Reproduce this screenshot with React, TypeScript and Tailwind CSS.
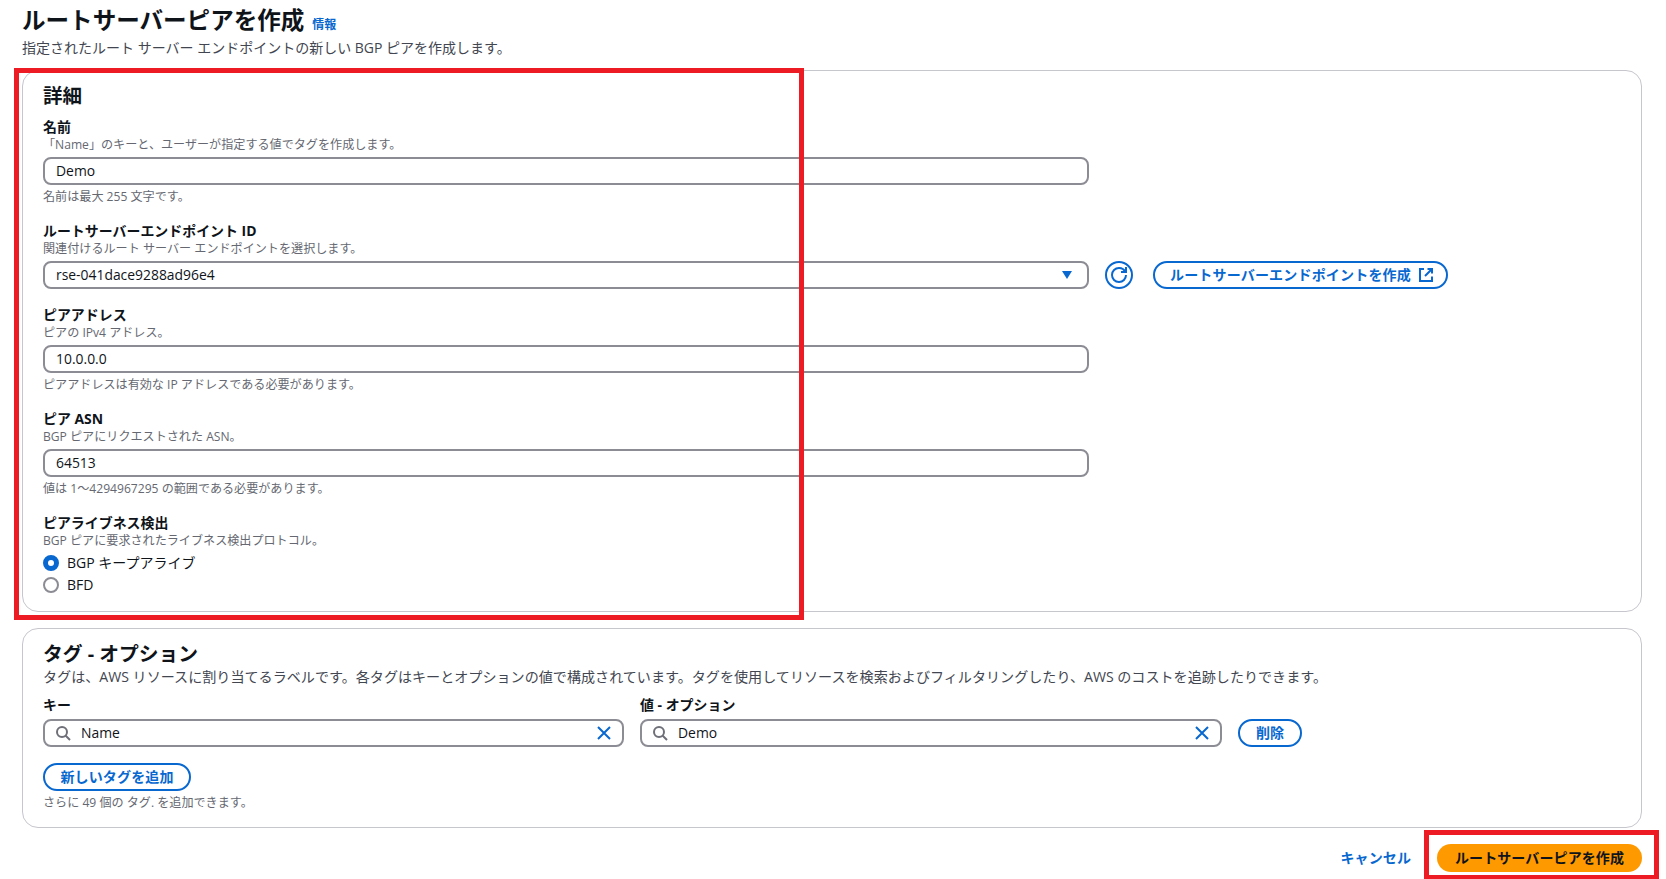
import { useState } from "react";
import type { ReactNode } from "react";

function SearchIcon() {
  return (
    <svg className="h-4 w-4 shrink-0" viewBox="0 0 16 16" fill="none" stroke="#6e6f78" strokeWidth="2">
      <circle cx="7" cy="7" r="5" />
      <path d="m15 15-4.5-4.5" />
    </svg>
  );
}

function CloseIcon() {
  return (
    <svg className="h-4 w-4 shrink-0" viewBox="0 0 16 16" fill="none" stroke="#0868d0" strokeWidth="2">
      <path d="m2 2 12 12M14 2 2 14" />
    </svg>
  );
}

function RefreshIcon() {
  return (
    <svg className="h-4 w-4 shrink-0" viewBox="0 0 16 16" fill="none" stroke="#0868d0" strokeWidth="2">
      <path d="M10 5h5V0" />
      <path d="M15 8a6.957 6.957 0 0 1-7 7 6.957 6.957 0 0 1-7-7 6.957 6.957 0 0 1 7-7 6.87 6.87 0 0 1 6.3 4" />
    </svg>
  );
}

function ExternalIcon() {
  return (
    <svg className="h-4 w-4 shrink-0" viewBox="0 0 16 16" fill="none" stroke="#0868d0" strokeWidth="2">
      <path d="M9.5 2H14v4.5M7 9l7-7" />
      <path d="M14 9.5V14H2V2h4" />
    </svg>
  );
}

type FieldProps = {
  label: string;
  description: string;
  constraint?: string;
  children: ReactNode;
};

function Field({ label, description, constraint, children }: FieldProps) {
  return (
    <div className="mb-[17px]">
      <div className="h-[19px] text-[13.95px] leading-[17px] font-bold">{label}</div>
      <div className="h-4 text-[12.1px] leading-4 text-[#656871]">{description}</div>
      <div className="mt-1">{children}</div>
      {constraint && <div className="mt-1 h-4 text-[12.1px] leading-4 text-[#656871]">{constraint}</div>}
    </div>
  );
}

const inputClass =
  "block h-7 w-[1046px] rounded-lg border-2 border-[#8c8c94] bg-white px-[11px] pb-px text-[13.9px] outline-none";

const radioClass =
  "h-4 w-4 appearance-none rounded-full border-2 border-[#8c8c94] checked:border-5 checked:border-[#0868d0]";

function TagInput({ label, initial }: { label: string; initial: string }) {
  const [value, setValue] = useState(initial);

  return (
    <div>
      <div className="h-[19px] text-[13.95px] leading-[17px] font-bold">{label}</div>
      <div className="mt-1 flex h-7 items-center rounded-lg border-2 border-[#8c8c94] px-[10px]">
        <SearchIcon />
        <input
          value={value}
          onChange={(e) => setValue(e.target.value)}
          className="ml-2.5 min-w-0 flex-1 text-[13.9px] outline-none"
        />
        <button type="button" onClick={() => setValue("")}>
          <CloseIcon />
        </button>
      </div>
    </div>
  );
}

export default function App() {
  const [name, setName] = useState("Demo");
  const [address, setAddress] = useState("10.0.0.0");
  const [asn, setAsn] = useState("64513");
  const [liveness, setLiveness] = useState("bgp");

  return (
    <main className="relative h-[879px] w-[1666px] overflow-hidden bg-white px-[22px] font-['Open_Sans','Noto_Sans_CJK_JP',sans-serif] whitespace-nowrap text-[#0f141a]">
      <header className="h-[70px] pt-[5px]">
        <div className="flex h-[30px] items-baseline">
          <h1 className="text-[23.55px] leading-[30px] font-bold">ルートサーバーピアを作成</h1>
          <a className="ml-2 text-xs font-bold text-[#0868d0]">情報</a>
        </div>
        <p className="mt-[3px] text-sm leading-5 text-[#424650]">
          指定されたルート サーバー エンドポイントの新しい BGP ピアを作成します。
        </p>
      </header>

      <section className="h-[542px] w-[1620px] rounded-2xl border border-[#c6c6cd] px-5 pt-[13px]">
        <h2 className="mb-[10px] h-6 text-[19.5px] leading-6 font-bold">詳細</h2>

        <Field
          label="名前"
          description="「Name」のキーと、ユーザーが指定する値でタグを作成します。"
          constraint="名前は最大 255 文字です。"
        >
          <input className={inputClass} value={name} onChange={(e) => setName(e.target.value)} />
        </Field>

        <Field
          label="ルートサーバーエンドポイント ID"
          description="関連付けるルート サーバー エンドポイントを選択します。"
        >
          <div className="flex items-center">
            <button type="button" className="flex h-7 w-[1046px] items-center justify-between rounded-lg border-2 border-[#8c8c94] pr-[15px] pl-[11px] text-[13.9px]">
              <span>rse-041dace9288ad96e4</span>
              <svg className="h-2 w-2.5" viewBox="0 0 10 8" fill="#0868d0">
                <path d="M0 0h10L5 8z" />
              </svg>
            </button>
            <button type="button" className="ml-4 flex h-7 w-7 items-center justify-center rounded-full border-2 border-[#0868d0]">
              <RefreshIcon />
            </button>
            <a className="ml-5 flex h-7 w-[295px] items-center justify-between rounded-full border-2 border-[#0868d0] pr-3 pl-[15px] text-sm font-bold tracking-[0.18px] text-[#0868d0]">
              <span>ルートサーバーエンドポイントを作成</span>
              <ExternalIcon />
            </a>
          </div>
        </Field>

        <Field
          label="ピアアドレス"
          description="ピアの IPv4 アドレス。"
          constraint="ピアアドレスは有効な IP アドレスである必要があります。"
        >
          <input className={inputClass} value={address} onChange={(e) => setAddress(e.target.value)} />
        </Field>

        <Field
          label="ピア ASN"
          description="BGP ピアにリクエストされた ASN。"
          constraint="値は 1～4294967295 の範囲である必要があります。"
        >
          <input className={inputClass} value={asn} onChange={(e) => setAsn(e.target.value)} />
        </Field>

        <Field label="ピアライブネス検出" description="BGP ピアに要求されたライブネス検出プロトコル。">
          <div className="-mt-px">
            <label className="flex h-[22px] items-center gap-2 text-sm">
              <input
                type="radio"
                checked={liveness === "bgp"}
                onChange={() => setLiveness("bgp")}
                className={radioClass}
              />
              <span>BGP キープアライブ</span>
            </label>
            <label className="flex h-[22px] items-center gap-2 text-sm">
              <input
                type="radio"
                checked={liveness === "bfd"}
                onChange={() => setLiveness("bfd")}
                className={radioClass}
              />
              <span>BFD</span>
            </label>
          </div>
        </Field>
      </section>

      <section className="mt-4 h-[200px] w-[1620px] rounded-2xl border border-[#c6c6cd] px-5 pt-[13px]">
        <h2 className="h-6 text-[19.8px] leading-6 font-bold">タグ - オプション</h2>
        <p className="h-5 text-[14.09px] leading-[22px] text-[#424650]">
          タグは、AWS リソースに割り当てるラベルです。各タグはキーとオプションの値で構成されています。タグを使用してリソースを検索およびフィルタリングしたり、AWS のコストを追跡したりできます。
        </p>
        <div className="mt-[10px] flex items-end">
          <div className="w-[581px]">
            <TagInput label="キー" initial="Name" />
          </div>
          <div className="ml-4 w-[582px]">
            <TagInput label="値 - オプション" initial="Demo" />
          </div>
          <button type="button" className="ml-4 h-7 w-16 rounded-full border-2 border-[#0868d0] text-sm leading-6 font-bold text-[#0868d0]">
            削除
          </button>
        </div>
        <button type="button" className="mt-4 flex h-7 w-[148px] items-center justify-center rounded-full border-2 border-[#0868d0] text-sm font-bold tracking-[0.15px] text-[#0868d0]">
          新しいタグを追加
        </button>
        <div className="mt-1 text-[12.1px] leading-4 text-[#656871]">さらに 49 個の タグ. を追加できます。</div>
      </section>

      <footer className="mt-4 flex w-[1620px] items-center justify-end text-sm font-bold tracking-[0.1px]">
        <button type="button" className="mr-[26px] text-[#0868d0]">キャンセル</button>
        <button type="button" className="h-7 w-[205px] rounded-full bg-[#ff9900]">ルートサーバーピアを作成</button>
      </footer>

      {/* Highlight boxes */}
      <div className="pointer-events-none absolute top-[68px] left-[14px] h-[552px] w-[790px] border-5 border-[#ed1c24]" />
      <div className="pointer-events-none absolute top-[830px] left-[1424px] h-[49px] w-[235px] border-5 border-b-4 border-[#ed1c24]" />
    </main>
  );
}
